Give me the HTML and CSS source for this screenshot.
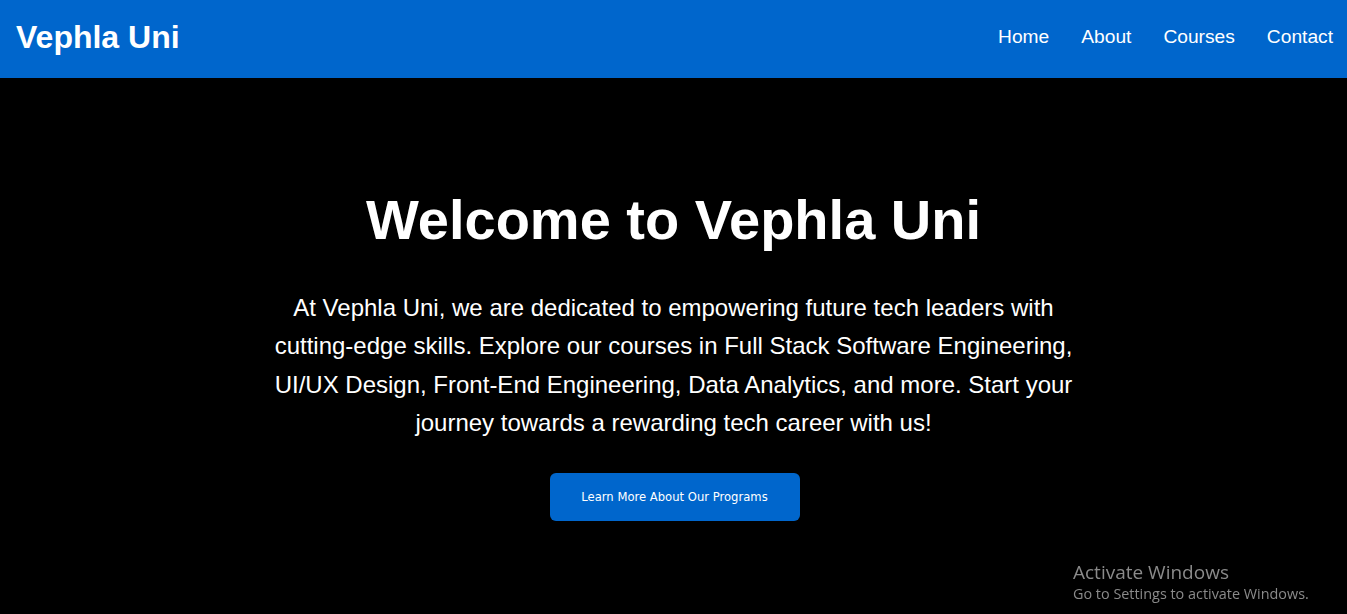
FILE: index.html
```html
<!DOCTYPE html>
<html lang="en">
<head>
<meta charset="utf-8">
<title>Vephla Uni</title>
<link rel="stylesheet" href="styles.css">
</head>
<body>
<header class="site-header">
  <div class="logo">Vephla Uni</div>
  <nav class="nav">
    <a href="#" class="nav-link">Home</a>
    <a href="#" class="nav-link">About</a>
    <a href="#" class="nav-link">Courses</a>
    <a href="#" class="nav-link">Contact</a>
  </nav>
</header>
<main class="hero">
  <h1 class="hero-title">Welcome to Vephla Uni</h1>
  <p class="hero-text">At Vephla Uni, we are dedicated to empowering future tech leaders with cutting-edge skills. Explore our courses in Full Stack Software Engineering, UI/UX Design, Front-End Engineering, Data Analytics, and more. Start your journey towards a rewarding tech career with us!</p>
  <a href="#" class="hero-btn">Learn More About Our Programs</a>
</main>
<div class="watermark">
  <div class="wm-title">Activate Windows</div>
  <div class="wm-sub">Go to Settings to activate Windows.</div>
</div>
</body>
</html>
```
FILE: styles.css
```css
* { box-sizing: border-box; }
html, body { margin: 0; padding: 0; height: 100%; }
body {
  font-family: "Liberation Sans", Arial, sans-serif;
  background: #000;
  color: #fff;
}
.site-header {
  background: #0066cc;
  height: 78px;
  display: flex;
  align-items: center;
  justify-content: space-between;
  padding: 0 14px 4px 16px;
}
.logo {
  font-size: 32px;
  font-weight: bold;
}
.nav {
  display: flex;
  gap: 32px;
}
.nav-link {
  color: #fff;
  text-decoration: none;
  font-size: 19.2px;
}
.hero {
  display: flex;
  flex-direction: column;
  align-items: center;
  text-align: center;
  padding: 110px 20px 0;
}
.hero-title {
  font-size: 56px;
  font-weight: bold;
  margin: 0;
  line-height: 64px;
}
.hero-text {
  max-width: 800px;
  font-size: 24px;
  line-height: 38.4px;
  margin: 37px 0 30px;
}
.hero-btn {
  display: flex;
  align-items: center;
  justify-content: center;
  width: 250px;
  height: 48px;
  margin-left: 2px;
  background: #0066cc;
  color: #fff;
  text-decoration: none;
  border-radius: 6px;
  font-family: "DejaVu Sans", Verdana, sans-serif;
  font-size: 11.6px;
}
.watermark {
  position: fixed;
  left: 1073px;
  top: 559px;
  color: #8a8a8a;
  font-family: "Open Sans", "Noto Sans", sans-serif;
  pointer-events: none;
}
.wm-title { font-size: 19px; line-height: 26px; }
.wm-sub { font-size: 14.4px; line-height: 18px; }
```
